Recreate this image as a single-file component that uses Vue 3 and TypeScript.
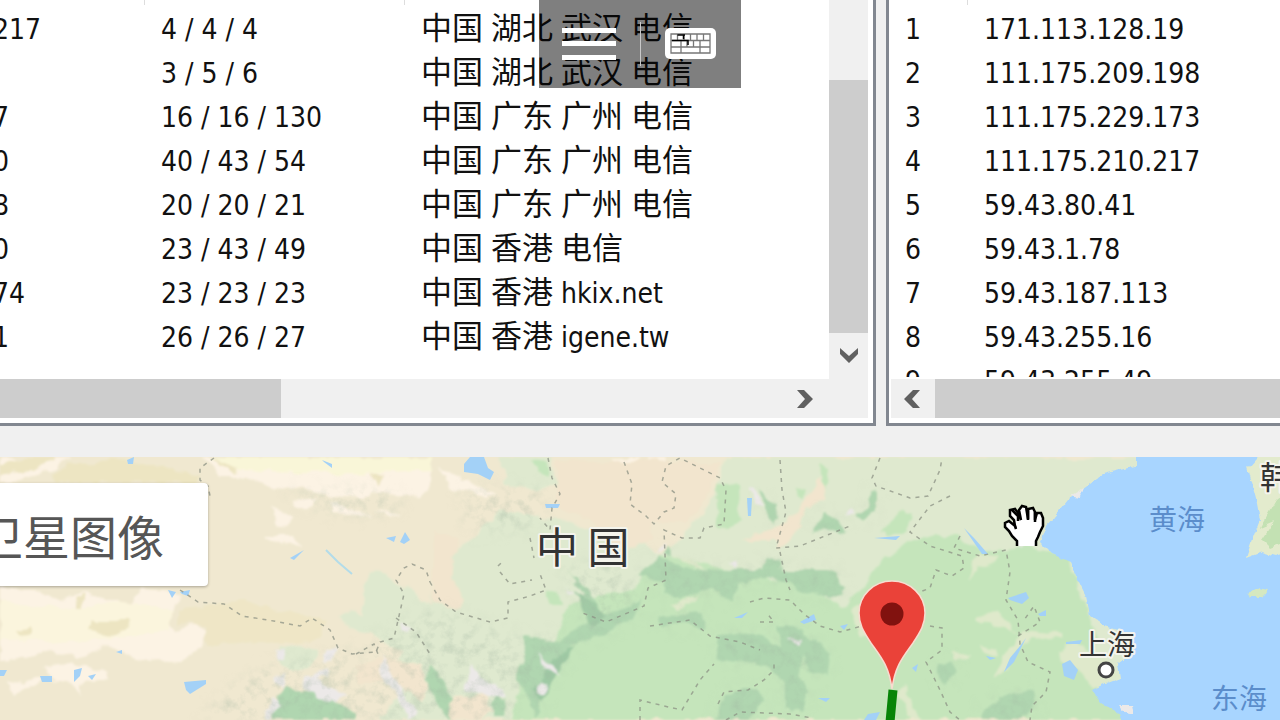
<script setup lang="ts">
interface Token {
  text: string
  cjk: boolean
}

interface Probe {
  ip: string
  times: string
  place: string
}

const probes: Probe[] = [
  { ip: '217', times: '4 / 4 / 4', place: '中国 湖北 武汉 电信' },
  { ip: '', times: '3 / 5 / 6', place: '中国 湖北 武汉 电信' },
  { ip: '7', times: '16 / 16 / 130', place: '中国 广东 广州 电信' },
  { ip: '0', times: '40 / 43 / 54', place: '中国 广东 广州 电信' },
  { ip: '8', times: '20 / 20 / 21', place: '中国 广东 广州 电信' },
  { ip: '0', times: '23 / 43 / 49', place: '中国 香港 电信' },
  { ip: '74', times: '23 / 23 / 23', place: '中国 香港 hkix.net' },
  { ip: '1', times: '26 / 26 / 27', place: '中国 香港 igene.tw' },
]

const hops: string[] = [
  '171.113.128.19',
  '111.175.209.198',
  '111.175.229.173',
  '111.175.210.217',
  '59.43.80.41',
  '59.43.1.78',
  '59.43.187.113',
  '59.43.255.16',
  '59.43.255.49',
]

function tokens(place: string): Token[] {
  return place
    .split(/([\u4e00-\u9fff]+)/)
    .filter((part) => part.length > 0)
    .map((text) => ({ text, cjk: /[\u4e00-\u9fff]/.test(text) }))
}

const sand: string[] = [
  '0,457 74,457 50,470 20,480 0,482',
  '0,586 40,592 60,600 85,594 130,604 142,590 175,592 180,600 168,620 178,630 195,624 208,632 204,646 178,660 150,662 128,656 110,646 80,656 50,650 20,660 0,662',
  '8,680 22,684 36,676 60,682 44,668 70,662 108,672 110,678 80,684 80,694 72,682 48,678 14,696',
  '205,457 430,457 430,486 418,498 390,492 360,498 330,496 300,488 270,486 240,476 220,476',
  '272,506 296,516 288,526 274,524',
  '264,536 290,536 304,546 280,544',
  '330,504 352,508 374,516 330,514',
  '292,500 318,498 310,506 296,506',
  '374,508 402,516 390,518',
  '441,468 470,482 495,496 485,498 450,488',
  '610,457 640,457 638,466 620,468',
  '648,457 668,457 664,466 650,466',
]

const khaki: string[] = [
  '20,457 60,457 40,468 10,472 0,478 0,464',
  '74,462 120,460 160,466 200,474 196,484 150,482 60,482 50,474',
  '92,620 128,620 130,628 116,636 88,632',
  '74,600 86,596 82,606 76,606',
  '15,630 30,626 32,632 20,634',
  '214,457 240,470 236,472 218,462',
  '370,474 384,476 378,486',
]

const pale: string[] = [
  '366,574 380,570 402,586 430,604 440,560 470,540 500,510 560,520 600,536 640,540 660,556 690,530 712,500 724,457 1280,457 1280,720 380,720 400,690 392,668 400,650 372,634 356,630 338,616 352,610 362,616',
  '500,457 550,457 556,486 530,490 505,484',
  '278,646 300,644 318,650 308,668 290,672 276,660',
]

const peach: string[] = [
  '556,460 720,462 706,500 688,524 652,522 650,540 620,552 590,520 560,508 556,500',
  '820,476 824,496 806,512 794,536 776,550 776,540 740,540 730,544 776,526 800,510',
  '435,530 458,540 452,576 466,600 460,608 432,602',
  '390,656 420,664 432,690 420,700 388,680 360,684 354,666',
  '452,700 486,694 494,712 478,720 446,720',
  '586,604 592,608 588,614 584,610',
]

const green: string[] = [
  '510,720 520,690 548,660 560,620 580,600 630,590 660,556 682,560 740,572 800,584 840,606 864,590 880,560 920,536 960,536 980,552 1030,546 1068,560 1078,586 1090,624 1098,634 1084,660 1100,686 1120,690 1126,720',
  '716,484 740,486 742,520 730,530 718,528',
  '530,460 546,462 550,474 540,470',
  '820,462 830,470 828,482 822,486',
  '548,592 558,590 562,606 548,606',
  '560,640 584,604 584,630 572,642 552,638',
  '892,520 904,506 914,512 908,534 888,536 880,530',
  '796,490 806,486 804,498 796,496',
]

const wood: string[] = [
  '638,576 660,556 668,562 684,568 720,570 760,570 766,558 784,560 780,572 838,572 846,588 830,598 794,588 774,576 740,584 732,602 712,590 678,598 664,592 664,580',
  '568,574 590,590 600,616 632,606 642,596 636,616 604,634 572,644 562,664 546,684 536,720 528,700 516,680 526,636 560,640 588,624 582,592',
  '658,618 700,612 704,630 680,622 662,630',
  '716,636 756,634 780,648 776,624 800,630 828,654 826,676 812,670 804,656 800,670 810,694 800,712 786,706 786,682 768,666 736,660 718,658',
  '726,694 756,690 764,700 748,720 716,720',
  '760,492 778,512 774,522 764,510',
  '870,492 876,490 876,512 864,520 856,518 870,508',
  '822,512 838,520 848,532 830,530 812,532',
  '982,708 1010,694 1034,690 1036,704 1024,720 980,720',
  '938,664 948,660 958,672 946,682 938,672',
  '666,544 674,550 672,558 666,554',
  '278,698 290,684 306,692 326,694 340,704 356,712 352,720 272,720',
  '430,664 444,680 452,700 448,720 440,706 428,680',
  '494,696 506,698 504,716 494,716',
]

const snow: string[] = [
  '272,652 286,648 284,660 276,660',
  '300,678 330,668 328,676 316,676 322,688 346,694 340,702 318,698 306,690',
  '274,678 286,676 286,688 274,684',
  '266,712 276,696 280,704 270,720 264,720',
  '382,656 390,668 402,690 416,714 410,720 394,694 380,670',
  '400,622 414,630 404,632',
  '538,652 548,660 560,676 550,674',
  '470,666 480,676 500,688 506,696 482,696 464,690',
  '540,680 548,684 546,692 538,692',
  '568,586 576,596 570,592',
  '750,488 756,490 762,508 756,506',
  '732,562 738,562 734,570',
  '656,554 664,540 664,548',
  '786,638 802,638 800,644',
  '846,514 852,510 856,516',
  '1020,546 1030,540 1022,550',
  '326,650 338,648 334,660 324,662',
]

const tanInGreen: string[] = [
  '976,618 996,612 1012,622 1016,634 1004,628 976,622',
  '980,644 996,648 998,658 982,652',
  '950,652 970,654 968,660 952,658',
  '1058,650 1076,644 1112,664 1118,678 1096,690 1084,676 1062,662',
  '1014,640 1022,630 1062,634 1060,640 1030,638 1018,650 1008,670 994,678 1008,652',
  '902,680 914,706 920,720 910,720 900,696',
  '966,578 980,554 1000,558 980,568',
  '668,602 700,596 692,604 676,608',
  '670,556 710,572 690,560',
  '850,610 862,602 880,640 862,636',
]

const lakes: string[] = [
  '464,464 470,457 484,457 488,468 494,472 490,480 478,474 464,472',
  '184,682 206,680 206,684 190,694 186,690',
  '74,670 82,668 80,676 74,682',
  '40,676 52,676 52,682 42,682',
  '88,676 96,674 92,680',
  '0,670 7,670 4,676 0,676',
  '127,460 134,457 133,464 128,464',
  '168,590 176,592 172,598',
  '180,592 190,590 188,596 182,594',
  '386,538 396,536 394,542',
  '400,542 405,532 410,540 404,544',
  '290,558 304,550 294,560',
  '322,460 332,464 332,468 324,462',
  '116,652 122,650 122,654',
  '545,504 560,504 558,508 546,508',
  '747,498 752,498 751,516 748,516',
  '1008,598 1026,592 1029,598 1022,604 1010,600',
  '1038,614 1046,610 1046,616 1040,616',
  '1062,664 1070,660 1078,670 1074,680 1064,676',
  '964,528 974,538 988,554 982,554',
  '1020,646 1026,638 1014,662 1004,672 1010,658',
  '986,656 996,658 990,660',
  '800,622 814,614 816,620 804,624',
  '734,618 748,612 742,618',
  '840,626 848,624 844,630',
  '874,538 900,536 896,540',
  '912,668 918,664 916,672',
  '868,714 880,712 876,720 864,720',
  '818,698 830,698 826,702',
  '1066,642 1082,640 1080,644 1066,644',
]

const borders: string[] = [
  'M214 458L200 468L200 480L208 486L210 496',
  'M180 590L198 602L224 604L242 616L268 620L300 626L312 618L330 630L338 648L352 654L376 652L380 642L394 638L404 594L396 580L404 568L412 564L426 570L430 582',
  'M396 618L416 632L430 654',
  'M356 654L374 644L378 654',
  'M430 582L440 600L456 612L490 622L508 618L508 602L530 596L546 590L540 574',
  'M530 538L534 558M498 566L504 560M500 572L510 584L532 580',
  'M548 458L552 478L560 494L552 508L550 530L540 518',
  'M624 462L632 484L630 504L646 516L654 524L664 512L674 508L676 494L662 482L666 466L680 458L720 478L726 490L724 524L704 528L700 538L682 538L664 530L666 580L648 588L644 606L606 622L580 612',
  'M780 460L782 490L786 512L776 548L800 546L820 538L850 526',
  'M780 552L786 580L790 590',
  'M880 458L872 478L876 486L910 498L928 496L940 470L942 458',
  'M950 496L930 506L910 532L930 546L962 556L964 568L952 576L936 570L930 588L920 592',
  'M960 536L954 548L980 556L1006 550L1010 572L1006 600L1018 620L1020 644L1028 662L1050 672L1046 692L1032 706L1030 720',
  'M1018 636L1040 622L1034 606L1024 620',
  'M750 602L764 598L790 600L804 614L820 626L840 632L862 626',
  'M760 622L774 622L766 612M650 626L690 620L710 636L740 642L760 650',
  'M640 720L640 700L664 706L682 710L700 680L714 664',
  'M718 704L724 692L748 690L764 680L774 670L774 664M726 720L740 712L790 714L812 718',
  'M930 626L942 628L942 650L926 662L940 690L950 712L960 720',
]
</script>

<template>
  <div class="desktop">
    <header class="panes">
      <section class="pane pane-left" aria-label="路由探测">
        <div class="pane-main">
          <div class="viewport">
            <table class="grid grid-left">
              <colgroup>
                <col class="col-ip" />
                <col class="col-times" />
                <col />
              </colgroup>
              <thead>
                <tr>
                  <th></th>
                  <th></th>
                  <th></th>
                </tr>
              </thead>
              <tbody>
                <tr v-for="(probe, i) in probes" :key="i">
                  <td class="flush">{{ probe.ip }}</td>
                  <td>{{ probe.times }}</td>
                  <td>
                    <span v-for="(token, j) in tokens(probe.place)" :key="j" :class="{ cjk: token.cjk }">{{ token.text }}</span>
                  </td>
                </tr>
              </tbody>
            </table>
          </div>
          <div class="vbar">
            <div class="vthumb"></div>
            <button class="arrow arrow-down" type="button" aria-label="向下滚动">
              <svg width="20" height="18" viewBox="0 0 20 18"><path d="M1 1V7L10 16L19 7V1L10 9Z" /></svg>
            </button>
          </div>
        </div>
        <div class="hbar">
          <div class="hthumb hthumb-left"></div>
          <button class="arrow arrow-right" type="button" aria-label="向右滚动">
            <svg width="18" height="20" viewBox="0 0 18 20"><path d="M1 1H8L17 10L8 19H1L9 10Z" /></svg>
          </button>
        </div>
      </section>

      <section class="pane pane-right" aria-label="节点列表">
        <div class="viewport">
          <table class="grid">
            <colgroup>
              <col class="col-index" />
              <col />
            </colgroup>
            <thead>
              <tr>
                <th></th>
                <th></th>
              </tr>
            </thead>
            <tbody>
              <tr v-for="(hop, i) in hops" :key="hop">
                <td class="index">{{ i + 1 }}</td>
                <td>{{ hop }}</td>
              </tr>
            </tbody>
          </table>
        </div>
        <div class="hbar">
          <button class="arrow arrow-left" type="button" aria-label="向左滚动">
            <svg width="18" height="20" viewBox="0 0 18 20"><path d="M17 1H10L1 10L10 19H17L9 10Z" /></svg>
          </button>
          <div class="hthumb hthumb-right"></div>
        </div>
      </section>
    </header>

    <main class="map">
      <svg class="map-canvas" viewBox="0 457 1280 263" preserveAspectRatio="xMinYMin slice" role="img" aria-label="地图">
        <defs>
          <filter id="rough" x="0" y="457" width="1280" height="263" filterUnits="userSpaceOnUse">
            <feTurbulence type="fractalNoise" baseFrequency="0.06" numOctaves="3" seed="4" result="n" />
            <feDisplacementMap in="SourceGraphic" in2="n" scale="12" xChannelSelector="R" yChannelSelector="G" />
            <feGaussianBlur stdDeviation="0.8" />
          </filter>
          <filter id="relief" x="0" y="457" width="1280" height="263" filterUnits="userSpaceOnUse">
            <feTurbulence type="fractalNoise" baseFrequency="0.09" numOctaves="4" seed="7" result="n" />
            <feColorMatrix in="n" type="matrix" values="0 0 0 0 0.35  0 0 0 0 0.45  0 0 0 0 0.35  1.6 0 0 0 -0.7" result="shade" />
            <feGaussianBlur in="SourceGraphic" stdDeviation="9" result="soft" />
            <feComposite in="shade" in2="soft" operator="in" />
          </filter>
          <filter id="coast" x="800" y="440" width="500" height="300" filterUnits="userSpaceOnUse">
            <feTurbulence type="fractalNoise" baseFrequency="0.12" numOctaves="2" seed="9" result="n" />
            <feDisplacementMap in="SourceGraphic" in2="n" scale="6" xChannelSelector="R" yChannelSelector="G" />
          </filter>
        </defs>
        <rect x="-20" y="440" width="1320" height="300" fill="#f0e8d0" />
        <g filter="url(#rough)">
          <rect x="-20" y="440" width="1320" height="300" fill="#f0e8d0" />
          <polygon v-for="p in sand" :key="p" :points="p" fill="#fcf3e4" />
          <polygon points="0,600 60,608 120,602 175,610 170,630 90,642 0,640" fill="#fbf5dd" />
          <polygon points="210,457 430,457 430,470 380,474 300,472 240,470" fill="#f9f6d8" />
          <polygon points="180,612 240,600 280,612 330,620 320,640 210,644 206,626 180,624" fill="#efe6c6" />
          <polygon v-for="p in khaki" :key="p" :points="p" fill="#ede5c2" />
          <polygon v-for="p in pale" :key="p" :points="p" fill="#dfe9cf" />
          <polygon v-for="p in peach" :key="p" :points="p" fill="#f2e5ce" />
          <polygon v-for="p in green" :key="p" :points="p" fill="#c5e5bb" />
          <polygon v-for="p in wood" :key="p" :points="p" fill="#b0d6b0" />
          <polygon points="534,690 552,660 576,644 560,668 544,700" fill="#9fc9a4" />
          <polygon points="574,590 596,602 604,618 590,626" fill="#a2cba6" />
          <polygon v-for="p in tanInGreen" :key="p" :points="p" fill="#dfe9cb" />
          <polygon v-for="p in snow" :key="p" :points="p" fill="#ece9e8" />
        </g>
        <g filter="url(#relief)" opacity="0.5">
          <polygon v-for="p in wood" :key="p" :points="p" />
          <polygon points="370,640 430,610 470,620 520,640 510,720 370,720" />
          <polygon points="560,570 620,560 640,600 590,620" />
          <polygon points="280,490 400,492 400,510 340,516" />
          <polygon points="220,700 260,670 350,650 370,720 200,720" />
          <polygon points="460,490 550,490 530,530 470,530" />
        </g>
        <g filter="url(#coast)">
          <path fill="#a8d5ff" d="M1136 440H1300V740H1128L1118 712L1100 702L1092 690L1104 684L1120 678L1118 664L1134 650L1130 634L1104 626L1090 616L1086 596L1078 580L1070 562L1052 554L1040 542L1046 526L1060 510L1068 500L1090 484L1104 474L1136 466Z" />
          <path fill="#e3ebcd" d="M1248 468L1264 450H1300V548L1276 556L1262 552L1246 558L1252 540L1260 520L1256 498Z" />
          <path fill="#c3e1b3" d="M1276 500L1300 480V536L1270 548L1262 540L1274 522L1260 528Z" />
          <path fill="#d5e8c0" d="M1248 594L1258 588L1268 590L1262 598L1250 598Z" />
          <path fill="#ece9e8" d="M1120 706L1132 706L1134 714L1124 712ZM1070 496L1084 488L1080 498Z" />
        </g>
        <polygon v-for="p in lakes" :key="p" :points="p" fill="#a3d1f7" />
        <path d="M326 550L338 562L352 574" fill="none" stroke="#b3dce9" stroke-width="2" />
        <path v-for="d in borders" :key="d" :d="d" class="border-line" />

        <text x="536" y="563" class="label country">中 国</text>
        <text x="1260" y="489" class="label korea">韩</text>
        <text x="1079" y="655" class="label city">上海</text>
        <text x="1149" y="530" class="label sea">黄海</text>
        <text x="1211" y="709" class="label sea">东海</text>
        <circle cx="1106" cy="670" r="7" fill="#fff" stroke="#444" stroke-width="3" />

        <path d="M893 690L890 722" stroke="#078407" stroke-width="9" />
        <path
          d="M892 689C889 666 881 657 871 643C863 631 859 624 859 613A33 32 0 0 1 925 613C925 624 921 631 913 643C903 657 895 666 892 689Z"
          fill="#ea4239"
          stroke="#f7dcd0"
          stroke-width="1.5"
        />
        <circle cx="892" cy="614" r="11.5" fill="#81120f" />

        <path
          class="hand"
          d="M1017 546V541L1012 536L1009 531L1005 527V523L1009 521L1015 526L1014 520L1010 516L1010 510L1015 509L1018 513L1021 520L1019 510L1022 506L1026 507L1028 519L1028 509L1033 508L1035 512V520L1037 513L1041 513L1043 518L1043 526L1040 532L1038 537L1036 541V546"
        />
        <path class="hand-line" d="M1015 526L1016 529M1012 510L1018 516V521M1028 509V520M1035 512V522" />
      </svg>
      <button class="satellite" type="button">卫星图像</button>
    </main>

    <nav class="remote-bar" aria-label="远程工具栏">
      <button class="remote-btn" type="button" aria-label="菜单">
        <svg width="54" height="32" viewBox="0 0 54 32"><path d="M0 0H54V5H0ZM0 13H54V18H0ZM0 27H54V32H0Z" fill="#fff" /></svg>
      </button>
      <button class="remote-btn remote-keys" type="button" aria-label="键盘">
        <svg width="51" height="32" viewBox="0 0 51 32">
          <rect width="51" height="31" rx="5" fill="#fff" />
          <path
            d="M6 6H45V25H6ZM6 12.500H45M6 19H45M12.500 6V12.500M19 6V12.500M25.500 6V12.500M32 6V12.500M38.500 6V12.500M16 12.500V19M22 12.500V19M28.500 12.500V19M35 12.500V19M16 19V25M35 19V25"
            fill="none"
            stroke="#777"
            stroke-width="1.300"
          />
          <path d="M7 12.500H17M12.500 7H20M18.500 7V11M17 12.500H23V17" fill="none" stroke="#000" stroke-width="1.500" />
        </svg>
      </button>
    </nav>
  </div>
</template>

<style>
body {
  margin: 0;
}
</style>

<style scoped>
.desktop {
  position: relative;
  display: flex;
  flex-direction: column;
  height: 100vh;
  overflow: hidden;
  background: #f0f0f0;
  color: #111;
  font-family: 'DejaVu Sans Condensed', 'DejaVu Sans', 'Noto Sans CJK SC', sans-serif;
  font-size: 28px;
}
.panes {
  display: grid;
  grid-template-columns: minmax(0, 876fr) minmax(0, 394fr);
  gap: 10px;
  flex: none;
  margin-bottom: 31px;
}
.pane {
  box-sizing: border-box;
  min-width: 0;
  background: #fff;
  border-bottom: 3px solid #828790;
}
.pane-left {
  padding: 0 5px 5px 0;
  border-right: 3px solid #828790;
}
.pane-right {
  padding: 0 0 5px 2px;
  border-left: 3px solid #828790;
}
.pane-main {
  display: flex;
}
.viewport {
  box-sizing: border-box;
  flex: 1;
  min-width: 0;
  height: 379px;
  overflow: hidden;
  border-bottom: 2px solid #fff;
}
.grid {
  width: 100%;
  table-layout: fixed;
  border-collapse: separate;
  border-spacing: 0;
}
.grid-left {
  margin-left: -7px;
}
.col-ip {
  width: 152px;
}
.col-times {
  width: 260px;
}
.col-index {
  width: 77px;
}
th {
  height: 8px;
  padding: 0;
  background: linear-gradient(#ddd, #ddd) right top / 1px 5px no-repeat;
}
th:last-child {
  background: none;
}
td {
  height: 44px;
  padding: 0 0 0 16px;
  line-height: 44px;
  white-space: nowrap;
}
.flush {
  padding: 0;
}
.index {
  padding-left: 14px;
}
.cjk {
  font-family: 'Noto Sans CJK SC', sans-serif;
  font-size: 31px;
  line-height: 20px;
}
td span {
  white-space: pre;
}
.vbar {
  display: flex;
  flex-direction: column;
  width: 39px;
  padding-top: 80px;
  box-sizing: border-box;
  background: #f0f0f0;
}
.vthumb {
  height: 253px;
  background: #cdcdcd;
}
.hbar {
  display: flex;
  justify-content: space-between;
  height: 39px;
  background: #f0f0f0;
}
.hthumb {
  background: #cdcdcd;
}
.hthumb-left {
  width: 281px;
}
.hthumb-right {
  flex: 1;
}
.arrow {
  display: flex;
  align-items: center;
  justify-content: center;
  padding: 0;
  border: 0;
  background: none;
  fill: #606060;
}
.arrow-down {
  height: 46px;
}
.arrow-right {
  width: 48px;
  margin-right: 39px;
}
.arrow-left {
  width: 42px;
  margin-right: 2px;
}
.map {
  position: relative;
  flex: 1;
  min-height: 0;
  overflow: hidden;
}
.map-canvas {
  display: block;
  width: 100%;
  height: 100%;
}
.border-line {
  fill: none;
  stroke: #8c9184;
  stroke-width: 1.5;
  stroke-dasharray: 4 5;
  opacity: 0.75;
}
.label {
  font-family: 'Noto Sans CJK SC', sans-serif;
  fill: #333;
  stroke: #f4f4ec;
  stroke-width: 4px;
  stroke-linejoin: round;
  paint-order: stroke;
}
.country {
  font-size: 42px;
}
.korea {
  font-size: 32px;
}
.city {
  font-size: 28px;
}
.sea {
  font-size: 28px;
  fill: #5b8dcb;
  stroke: none;
}
.hand {
  fill: #fff;
  stroke: #000;
  stroke-width: 2.5;
}
.hand-line {
  fill: none;
  stroke: #000;
  stroke-width: 2.5;
}
.satellite {
  position: absolute;
  top: 26px;
  left: -66px;
  height: 103px;
  padding: 0 44px 0 42px;
  border: 0;
  border-radius: 4px;
  background: #fff;
  box-shadow: 0 1px 3px rgba(0, 0, 0, 0.3);
  color: #565656;
  font-family: 'Noto Sans CJK SC', sans-serif;
  font-size: 47px;
  line-height: 60px;
  white-space: nowrap;
}
.remote-bar {
  position: absolute;
  top: 0;
  left: 50%;
  display: flex;
  align-items: center;
  width: 202px;
  height: 88px;
  margin-left: -101px;
  background: rgba(0, 0, 0, 0.5);
}
.remote-btn {
  display: flex;
  flex: 1;
  align-items: center;
  justify-content: center;
  height: 44px;
  padding: 0;
  border: 0;
  background: none;
}
.remote-keys {
  border-left: 1px solid #c8c8c8;
}
</style>
